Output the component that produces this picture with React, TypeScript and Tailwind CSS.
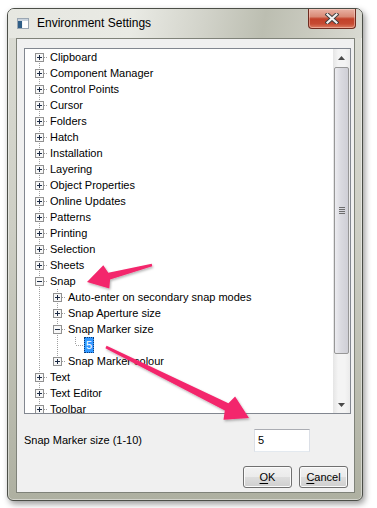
import React from 'react'

type Row = { l: number; t: string; b?: '+' | '-'; sel?: boolean }

const rows: Row[] = [
  { l: 0, t: 'Clipboard', b: '+' },
  { l: 0, t: 'Component Manager', b: '+' },
  { l: 0, t: 'Control Points', b: '+' },
  { l: 0, t: 'Cursor', b: '+' },
  { l: 0, t: 'Folders', b: '+' },
  { l: 0, t: 'Hatch', b: '+' },
  { l: 0, t: 'Installation', b: '+' },
  { l: 0, t: 'Layering', b: '+' },
  { l: 0, t: 'Object Properties', b: '+' },
  { l: 0, t: 'Online Updates', b: '+' },
  { l: 0, t: 'Patterns', b: '+' },
  { l: 0, t: 'Printing', b: '+' },
  { l: 0, t: 'Selection', b: '+' },
  { l: 0, t: 'Sheets', b: '+' },
  { l: 0, t: 'Snap', b: '-' },
  { l: 1, t: 'Auto-enter on secondary snap modes', b: '+' },
  { l: 1, t: 'Snap Aperture size', b: '+' },
  { l: 1, t: 'Snap Marker size', b: '-' },
  { l: 2, t: '5', sel: true },
  { l: 1, t: 'Snap Marker colour', b: '+' },
  { l: 0, t: 'Text', b: '+' },
  { l: 0, t: 'Text Editor', b: '+' },
  { l: 0, t: 'Toolbar', b: '+' },
]

// root level keeps going past the visible part of the list
function hasNext(i: number) {
  const L = rows[i].l
  if (L === 0) return true
  for (let j = i + 1; j < rows.length; j++) {
    if (rows[j].l < L) return false
    if (rows[j].l === L) return true
  }
  return false
}

function ancestorContinues(i: number, a: number) {
  for (let k = i - 1; k >= 0; k--) {
    if (rows[k].l === a) return hasNext(k)
  }
  return false
}

const LINE = '#a0a0a0'

function Connector({ i }: { i: number }) {
  const r = rows[i]
  const w = 18 * (r.l + 1) + 5
  const cx = (lvl: number) => 14 + 18 * lvl + 0.5
  const guides = []
  for (let a = 0; a < r.l; a++) {
    if (ancestorContinues(i, a)) guides.push(a)
  }
  const bx = 10 + 18 * r.l
  return (
    <svg width={w} height={16} shapeRendering="crispEdges" className="shrink-0">
      {guides.map((a) => (
        <line key={a} x1={cx(a)} x2={cx(a)} y1={0} y2={16} stroke={LINE} strokeDasharray="1 1" />
      ))}
      {i > 0 && <line x1={cx(r.l)} x2={cx(r.l)} y1={0} y2={8} stroke={LINE} strokeDasharray="1 1" />}
      {hasNext(i) && <line x1={cx(r.l)} x2={cx(r.l)} y1={8} y2={16} stroke={LINE} strokeDasharray="1 1" />}
      <line x1={cx(r.l)} x2={w} y1={8.5} y2={8.5} stroke={LINE} strokeDasharray="1 1" />
      {r.b && (
        <g>
          <rect x={bx + 0.5} y={4.5} width={8} height={8} fill="#f7f7f7" stroke="#919191" />
          <line x1={bx + 2} x2={bx + 7} y1={8.5} y2={8.5} stroke="#1b2a44" />
          {r.b === '+' && <line x1={bx + 4.5} x2={bx + 4.5} y1={6} y2={11} stroke="#1b2a44" />}
        </g>
      )}
    </svg>
  )
}

function ScrollBar() {
  return (
    <div className="flex w-[17px] shrink-0 flex-col bg-[linear-gradient(90deg,#e5e5e5,#f4f4f4_30%,#f4f4f4_70%,#ebebeb)]">
      <div className="flex h-[17px] items-center justify-center">
        <svg width="7" height="4"><path d="M3.5 0 L7 4 L0 4 Z" fill="#4a4a4a" /></svg>
      </div>
      <div className="mx-[1px] mt-[1px] flex h-[287px] items-center justify-center rounded-[2px] border border-[#979797] bg-[linear-gradient(90deg,#ececf0,#dadae0_45%,#cfcfd6)]">
        <div className="flex flex-col gap-[1px]">
          <div className="h-[1px] w-[6px] bg-[#6d6d6d]" />
          <div className="h-[1px] w-[6px] bg-[#6d6d6d]" />
          <div className="h-[1px] w-[6px] bg-[#6d6d6d]" />
          <div className="h-[1px] w-[6px] bg-[#6d6d6d]" />
        </div>
      </div>
      <div className="flex-1" />
      <div className="flex h-[17px] items-center justify-center">
        <svg width="7" height="4"><path d="M0 0 L7 0 L3.5 4 Z" fill="#4a4a4a" /></svg>
      </div>
    </div>
  )
}

function Button({ children }: { children: React.ReactNode }) {
  return (
    <div className="flex h-[22px] w-[49px] items-center justify-center rounded-[3px] border border-[#707070] bg-[linear-gradient(180deg,#f2f2f2_0%,#ebebeb_50%,#dddddd_51%,#cfcfcf_100%)] text-[11px] text-black shadow-[inset_0_0_0_1px_#fbfbfb]">
      {children}
    </div>
  )
}

export default function App() {
  return (
    <div className="relative h-[508px] w-[377px] overflow-hidden bg-white pl-[7px] pt-[8px] font-['Liberation_Sans',Arial,sans-serif]">
      <div className="flex h-[493px] w-[356px] flex-col rounded-t-[7px] rounded-b-[6px] border border-[#4b4e47] bg-[linear-gradient(180deg,#dcddd5_0%,#cdcec4_45%,#aeb0a1_100%)] shadow-[inset_0_0_0_1px_rgba(255,255,255,0.45),2px_3px_6px_rgba(0,0,0,0.4)]">
        {/* title bar */}
        <div className="flex h-[29px] shrink-0 items-start rounded-t-[6px] bg-[linear-gradient(100deg,#e6e7e1_0%,#e9eae4_35%,#d2d3ca_55%,#bcbeb1_72%,#c9cabf_85%,#d9dad2_100%)] pr-[6px]">
          <div className="flex items-center pl-[9px] pt-[8px]">
            <svg width="12" height="11" shapeRendering="crispEdges">
              <rect x="0.5" y="0.5" width="11" height="10" fill="#f4f6f8" stroke="#9aa6b2" />
              <rect x="1" y="1" width="10" height="2" fill="#c9d3dd" />
              <rect x="1" y="3" width="4" height="7" fill="#2f5e86" />
              <rect x="6" y="3" width="5" height="7" fill="#ffffff" />
            </svg>
            <span className="ml-[8px] text-[12px] leading-[12px] text-black">Environment Settings</span>
          </div>
          <div className="ml-auto flex h-[20px] w-[48px] items-center justify-center rounded-b-[4px] border border-t-0 border-[#6e2b1f] bg-[linear-gradient(180deg,#e9b2a4_0%,#d98a76_40%,#c2412a_52%,#c64a32_78%,#dd7e63_100%)] shadow-[inset_0_0_0_1px_rgba(255,220,210,0.45)]">
            <svg width="14" height="11">
              <path d="M2.5 1.5 L11.5 9.5 M11.5 1.5 L2.5 9.5" stroke="#3c3c3c" strokeWidth="4" strokeLinecap="square" />
              <path d="M2.5 1.5 L11.5 9.5 M11.5 1.5 L2.5 9.5" stroke="#f2f2f2" strokeWidth="2.2" strokeLinecap="square" />
            </svg>
          </div>
        </div>

        {/* client area */}
        <div className="ml-[8px] flex h-[455px] w-[339px] flex-col border border-[#7f8279] bg-[#f0f0f0]">
          <div className="ml-[7px] mt-[9px] flex h-[366px] w-[327px] border border-[#828790] bg-white">
            <div className="flex-1 overflow-hidden text-[11px] leading-[16px] text-black">
              {rows.map((r, i) => (
                <div key={i} className="flex h-[16px] items-center">
                  <Connector i={i} />
                  {r.sel ? (
                    <span className="h-[16px] border border-dotted border-[#0b3a78] bg-[#3399ff] px-[1px] leading-[14px] text-white">{r.t}</span>
                  ) : (
                    <span className="whitespace-nowrap px-[2px]">{r.t}</span>
                  )}
                </div>
              ))}
            </div>
            <ScrollBar />
          </div>

          <div className="mt-[15px] flex items-center text-[11px] text-black">
            <span className="ml-[7px]">Snap Marker size (1-10)</span>
            <div className="ml-auto mr-[44px] flex h-[23px] w-[56px] items-center border border-[#abadb3] border-b-[#e3e9ef] border-x-[#dbdfe6] bg-white pl-[3px]">5</div>
          </div>

          <div className="mr-[6px] mt-[14px] flex justify-end gap-[7px]">
            <Button><span className="underline underline-offset-[2px]">O</span>K</Button>
            <Button><span className="underline underline-offset-[2px]">C</span>ancel</Button>
          </div>
        </div>
      </div>

      {/* annotation arrows */}
      <svg className="pointer-events-none absolute left-0 top-0" width="377" height="508">
        <defs>
          <filter id="sh" x="-20%" y="-20%" width="140%" height="140%">
            <feDropShadow dx="1" dy="1.5" stdDeviation="1.2" floodColor="#000" floodOpacity="0.3" />
          </filter>
        </defs>
        <polygon
          filter="url(#sh)"
          fill="#f3266c"
          points="87,282 103.3,265.3 108.3,272.7 151.7,263.7 152.3,266.3 110.1,279.5 109.3,288.5"
        />
        <polygon
          filter="url(#sh)"
          fill="#f3266c"
          points="249,418 235.1,396.6 228.4,403.3 106.6,345.8 105.4,348.2 224.8,410.5 223.5,419.8"
        />
      </svg>
    </div>
  )
}
